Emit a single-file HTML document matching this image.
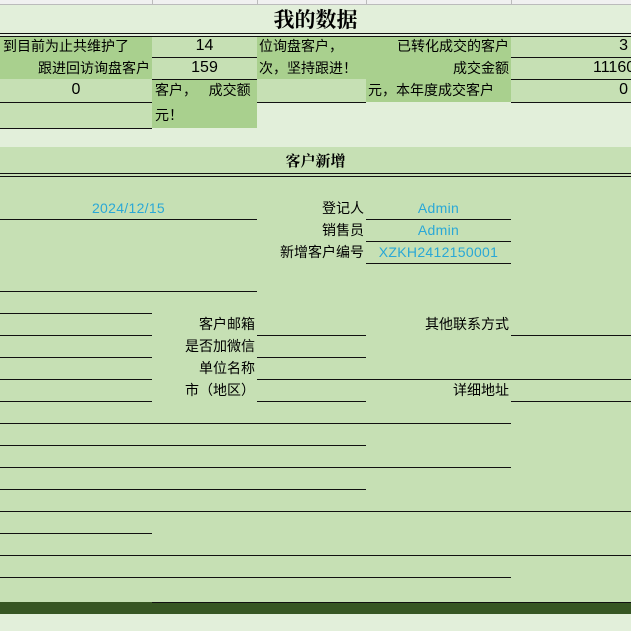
<!DOCTYPE html>
<html><head><meta charset="utf-8"><style>
*{margin:0;padding:0;box-sizing:border-box}
body{width:631px;height:631px;overflow:hidden;background:#e2efda;position:relative;font-family:"Liberation Sans","Noto Sans CJK SC",sans-serif;font-size:14px;color:#000}
div{position:absolute}
.r{text-align:right}.c{text-align:center}
.t{line-height:22px;white-space:nowrap;overflow:hidden}
.n{font-size:16px}
.ln{height:1px;background:#111}
.b{color:#2aa8d6;letter-spacing:0.3px}
</style></head><body>
<div style="left:0;top:0;width:631px;height:5px;background:#f0f0f0;border-bottom:1px solid #bbb"></div>
<div style="left:152px;top:0;width:1px;height:5px;background:#bbb"></div>
<div style="left:257px;top:0;width:1px;height:5px;background:#bbb"></div>
<div style="left:366px;top:0;width:1px;height:5px;background:#bbb"></div>
<div style="left:511px;top:0;width:1px;height:5px;background:#bbb"></div>

<div class="c" style="left:0;top:5px;width:631px;height:28px;font-size:21px;font-weight:bold;line-height:30px;font-family:'Liberation Serif','Noto Serif CJK SC',serif">我的数据</div>
<div style="left:0;top:33px;width:631px;height:4px;border-top:1px solid #111;border-bottom:1px solid #111"></div>

<div style="left:0;top:37px;width:152px;height:42px;background:#a9d08e"></div>
<div style="left:152px;top:37px;width:105px;height:42px;background:#c6e0b4"></div>
<div style="left:257px;top:37px;width:109px;height:42px;background:#a9d08e"></div>
<div style="left:366px;top:37px;width:145px;height:65px;background:#a9d08e"></div>
<div style="left:511px;top:37px;width:120px;height:65px;background:#c6e0b4"></div>
<div style="left:0;top:79px;width:152px;height:49px;background:#c6e0b4"></div>
<div style="left:152px;top:79px;width:105px;height:49px;background:#a9d08e"></div>
<div style="left:257px;top:79px;width:109px;height:23px;background:#c6e0b4"></div>
<div class="ln" style="left:152px;top:57px;width:105px"></div>
<div class="ln" style="left:511px;top:57px;width:120px"></div>
<div class="ln" style="left:152px;top:79px;width:105px"></div>
<div class="ln" style="left:511px;top:79px;width:120px"></div>
<div class="ln" style="left:0;top:102px;width:152px"></div>
<div class="ln" style="left:257px;top:102px;width:109px"></div>
<div class="ln" style="left:511px;top:102px;width:120px"></div>
<div class="ln" style="left:0;top:128px;width:152px"></div>

<div class="t" style="left:3px;top:35px">到目前为止共维护了</div>
<div class="t c n" style="left:152px;top:35px;width:105px">14</div>
<div class="t" style="left:259px;top:35px">位询盘客户，</div>
<div class="t r" style="left:366px;top:35px;width:143px">已转化成交的客户</div>
<div class="t r n" style="left:511px;top:35px;width:117px">3</div>
<div class="t r" style="left:0;top:57px;width:150px">跟进回访询盘客户</div>
<div class="t c n" style="left:152px;top:57px;width:105px">159</div>
<div class="t" style="left:259px;top:57px">次，坚持跟进！</div>
<div class="t r" style="left:366px;top:57px;width:143px">成交金额</div>
<div class="t n" style="left:511px;top:57px;width:120px;padding-left:82px">11160</div>
<div class="t c n" style="left:0;top:79px;width:152px">0</div>
<div class="t" style="left:155px;top:79px">客户，&nbsp;&nbsp;&nbsp;成交额</div>
<div class="t" style="left:368px;top:79px">元，本年度成交客户</div>
<div class="t r n" style="left:511px;top:79px;width:117px">0</div>
<div class="t" style="left:155px;top:104px">元！</div>

<div style="left:0;top:147px;width:631px;height:27px;background:#c6e0b4"></div>
<div class="c" style="left:0;top:149px;width:631px;line-height:26px;font-size:15px;font-weight:bold;font-family:'Liberation Serif','Noto Serif CJK SC',serif">客户新增</div>
<div style="left:0;top:173px;width:631px;height:4px;border-top:1px solid #111;border-bottom:1px solid #111;background:#c6e0b4"></div>
<div style="left:0;top:177px;width:631px;height:425px;background:#c6e0b4"></div>
<div style="left:0;top:602px;width:631px;height:12px;background:#375623"></div>
<div class="ln" style="left:152px;top:602px;width:479px"></div>

<div class="t c b" style="left:0;top:197px;width:257px">2024/12/15</div>
<div class="t r" style="left:257px;top:197px;width:107px">登记人</div>
<div class="t c b" style="left:366px;top:197px;width:145px">Admin</div>
<div class="t r" style="left:257px;top:219px;width:107px">销售员</div>
<div class="t c b" style="left:366px;top:219px;width:145px">Admin</div>
<div class="t r" style="left:250px;top:241px;width:114px">新增客户编号</div>
<div class="t c b" style="left:366px;top:241px;width:145px">XZKH2412150001</div>
<div class="t r" style="left:152px;top:313px;width:103px">客户邮箱</div>
<div class="t r" style="left:366px;top:313px;width:143px">其他联系方式</div>
<div class="t r" style="left:152px;top:335px;width:103px">是否加微信</div>
<div class="t r" style="left:152px;top:357px;width:103px">单位名称</div>
<div class="t r" style="left:152px;top:379px;width:103px">市（地区）</div>
<div class="t r" style="left:366px;top:379px;width:143px">详细地址</div>

<div class="ln" style="left:0;top:219px;width:257px"></div>
<div class="ln" style="left:366px;top:219px;width:145px"></div>
<div class="ln" style="left:366px;top:241px;width:145px"></div>
<div class="ln" style="left:366px;top:263px;width:145px"></div>
<div class="ln" style="left:0;top:291px;width:257px"></div>
<div class="ln" style="left:0;top:313px;width:152px"></div>
<div class="ln" style="left:0;top:335px;width:152px"></div>
<div class="ln" style="left:257px;top:335px;width:109px"></div>
<div class="ln" style="left:511px;top:335px;width:120px"></div>
<div class="ln" style="left:0;top:357px;width:152px"></div>
<div class="ln" style="left:257px;top:357px;width:109px"></div>
<div class="ln" style="left:0;top:379px;width:152px"></div>
<div class="ln" style="left:257px;top:379px;width:374px"></div>
<div class="ln" style="left:0;top:401px;width:152px"></div>
<div class="ln" style="left:257px;top:401px;width:109px"></div>
<div class="ln" style="left:511px;top:401px;width:120px"></div>
<div class="ln" style="left:0;top:423px;width:511px"></div>
<div class="ln" style="left:0;top:445px;width:366px"></div>
<div class="ln" style="left:0;top:467px;width:511px"></div>
<div class="ln" style="left:0;top:489px;width:366px"></div>
<div class="ln" style="left:0;top:511px;width:631px"></div>
<div class="ln" style="left:0;top:533px;width:152px"></div>
<div class="ln" style="left:0;top:555px;width:631px"></div>
<div class="ln" style="left:0;top:577px;width:511px"></div>
</body></html>
